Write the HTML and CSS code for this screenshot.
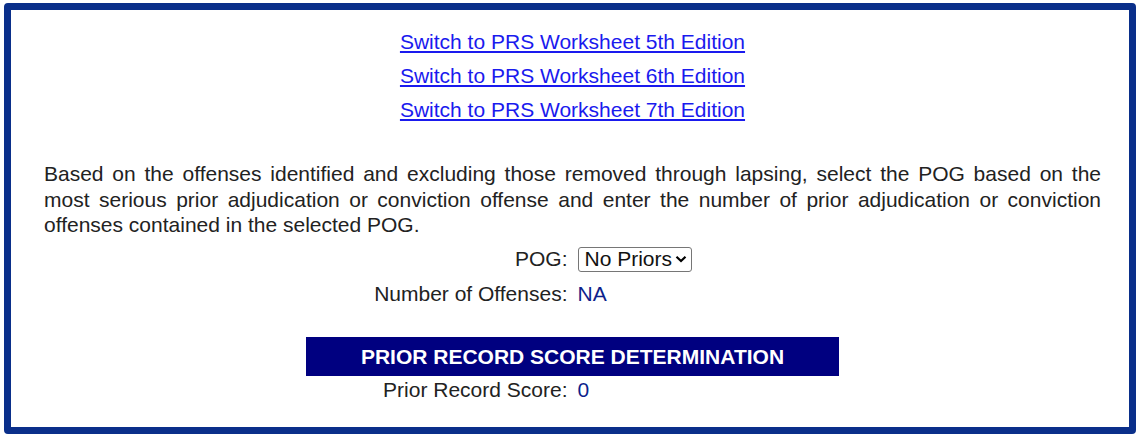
FILE: index.html
```html
<!DOCTYPE html>
<html>
<head>
<meta charset="utf-8">
<link rel="stylesheet" href="styles.css">
</head>
<body>
<div class="frame">
  <div class="links">
    <a href="#">Switch to PRS Worksheet 5th Edition</a>
    <a href="#">Switch to PRS Worksheet 6th Edition</a>
    <a href="#">Switch to PRS Worksheet 7th Edition</a>
  </div>
  <p class="intro">Based on the offenses identified and excluding those removed through lapsing, select the POG based on the most serious prior adjudication or conviction offense and enter the number of prior adjudication or conviction offenses contained in the selected POG.</p>
  <div class="form">
    <div class="row row-pog">
      <span class="label">POG:</span>
      <span class="value"><span class="select">No Priors<svg class="chev" width="12" height="8" viewBox="0 0 12 8"><path d="M1.5 1.8 L6 6 L10.5 1.8" fill="none" stroke="#000" stroke-width="2.2"/></svg></span></span>
    </div>
    <div class="row">
      <span class="label">Number of Offenses:</span>
      <span class="value data">NA</span>
    </div>
  </div>
  <div class="header">PRIOR RECORD SCORE DETERMINATION</div>
  <div class="form">
    <div class="row row-score">
      <span class="label">Prior Record Score:</span>
      <span class="value data">0</span>
    </div>
  </div>
</div>
</body>
</html>
```
FILE: styles.css
```css
html, body {
  margin: 0;
  background: #fff;
}
body {
  padding: 3px 5px 3px 4px;
  font-family: "Liberation Sans", Arial, sans-serif;
  font-size: 21px;
  color: #222;
}
.frame {
  box-sizing: border-box;
  height: 431px;
  border: 7px solid #0a2f8a;
  border-radius: 4px;
  padding: 15px 28px 0 33px;
}
.links {
  display: flex;
  flex-direction: column;
  align-items: center;
}
.links a {
  color: #1a1aee;
  text-decoration: underline;
  line-height: 34px;
}
.intro {
  margin: 34px 0 4px;
  line-height: 25.5px;
  text-align: justify;
}
.form {
  display: flex;
  flex-direction: column;
}
.row {
  display: grid;
  grid-template-columns: 1fr 1fr;
  column-gap: 10px;
  align-items: center;
  height: 35px;
}
.label {
  text-align: right;
}
.value.data {
  color: #0d1f8c;
}
.select {
  display: inline-flex;
  align-items: center;
  gap: 3px;
  box-sizing: border-box;
  height: 25px;
  padding: 0 4px 0 6px;
  border: 1px solid #767676;
  border-radius: 3px;
  color: #111;
}
.chev {
  display: block;
}
.header {
  width: 533px;
  box-sizing: border-box;
  margin: 25px auto 0;
  background: #000080;
  color: #fff;
  font-weight: bold;
  text-align: center;
  height: 39px;
  line-height: 39px;
}
.row-score {
  height: 28px;
}
```
